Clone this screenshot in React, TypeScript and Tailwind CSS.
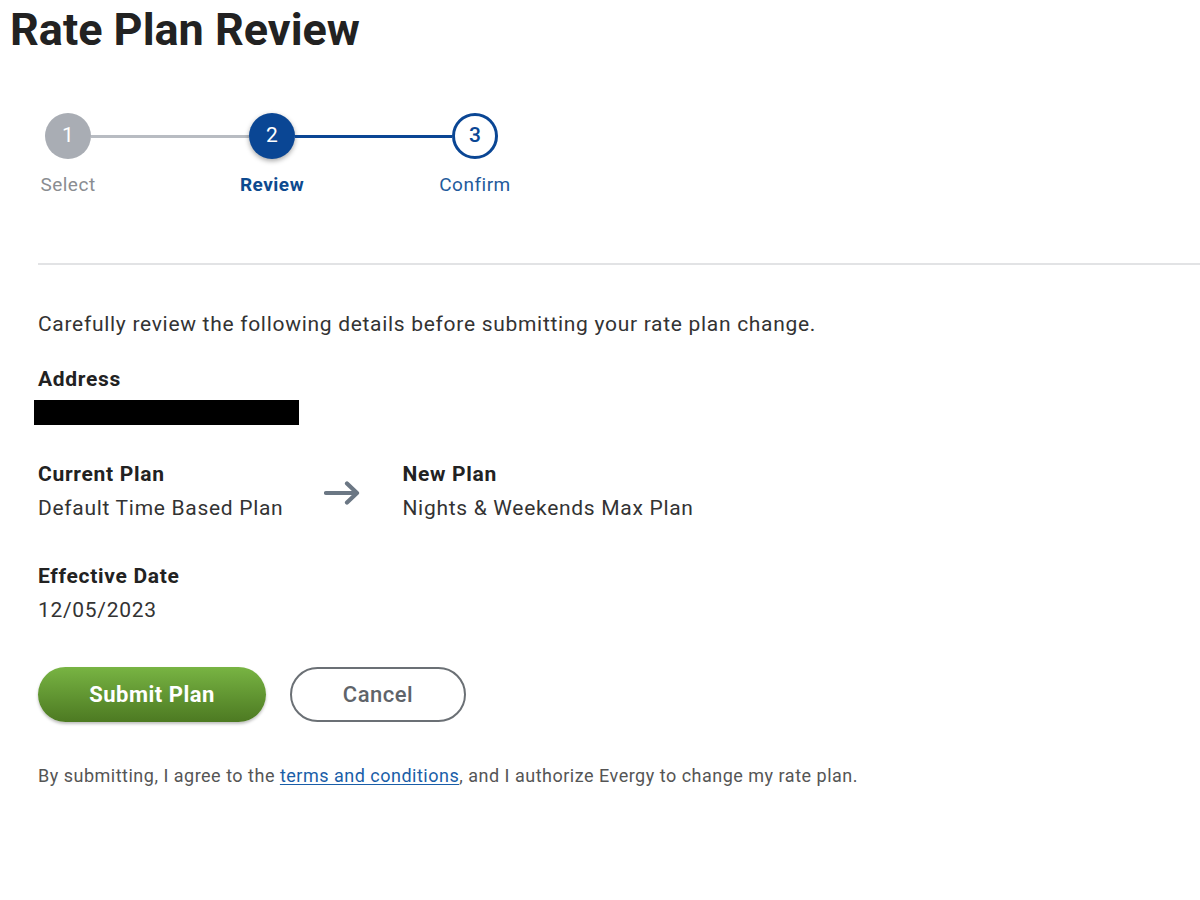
import React from "react";

const steps = [
	{ n: 1, label: "Select", state: "done" },
	{ n: 2, label: "Review", state: "active" },
	{ n: 3, label: "Confirm", state: "todo" },
];

const Stepper: React.FC = () => (
	<div className="flex items-start ml-[22px] mt-[55px]">
		{steps.map((s, i) => (
			<React.Fragment key={s.n}>
				<div className="flex flex-col items-center w-[92px]">
					<div
						className={
							s.state === "done"
								? "w-[46px] h-[46px] rounded-full bg-[#a9adb4] text-white flex items-center justify-center text-[21px]"
								: s.state === "active"
									? "w-[46px] h-[46px] rounded-full bg-[#0a4694] text-white flex items-center justify-center text-[21px] shadow-[0_2px_5px_rgba(0,0,0,0.35)]"
									: "w-[46px] h-[46px] rounded-full bg-white border-[3px] border-[#0a4694] text-[#0a4694] flex items-center justify-center text-[21px] font-medium"
						}
					>
						{s.n}
					</div>
					<span
						className={
							s.state === "done"
								? "mt-[13px] text-[19px] leading-[26px] tracking-[0.5px] text-[#8a8d91]"
								: s.state === "active"
									? "mt-[13px] text-[19px] leading-[26px] tracking-[0.5px] font-bold text-[#0d4a8f]"
									: "mt-[13px] text-[19px] leading-[26px] tracking-[0.5px] text-[#1f5b9c]"
						}
					>
						{s.label}
					</span>
				</div>
				{i < steps.length - 1 && (
					<div
						className={
							i === 0
								? "h-[3px] w-[158px] -mx-[23px] mt-[22px] bg-[#b8bcc2]"
								: "h-[3px] w-[157px] -mx-[23px] mt-[22px] bg-[#0a4694]"
						}
					/>
				)}
			</React.Fragment>
		))}
	</div>
);

export default function App() {
	return (
		<div className="min-h-[900px] bg-white font-['Roboto',sans-serif] text-[#2a2a2a]">
			<h1 className="pl-[10px] pt-[2px] text-[45px] leading-[56px] font-bold text-[#222]">Rate Plan Review</h1>
			<Stepper />
			<div className="ml-[38px] mt-[65px] h-[2px] bg-[#e2e3e5]" />
			<div className="pl-[38px] text-[21px] tracking-[0.7px]">
				<p className="mt-[45px] leading-[28px] text-[#333]">
					Carefully review the following details before submitting your rate plan change.
				</p>
				<div className="mt-[27px]">
					<div className="leading-[28px] font-bold text-[#222]">Address</div>
					<div className="-ml-[4px] mt-[7px] w-[265px] h-[25px] bg-black" />
				</div>
				<div className="mt-[34px] flex items-start">
					<div>
						<div className="leading-[30px] font-bold text-[#222]">Current Plan</div>
						<div className="mt-[4px] leading-[30px] text-[#333]">Default Time Based Plan</div>
					</div>
					<svg className="ml-[41px] mr-[42px] mt-[22px]" width="36" height="24" viewBox="0 0 36 24" fill="none">
						<path d="M2 12H32M23 2.5L33 12L23 21.5" stroke="#6b7784" strokeWidth="4.2" strokeLinecap="round" strokeLinejoin="round" />
					</svg>
					<div>
						<div className="leading-[30px] font-bold text-[#222]">New Plan</div>
						<div className="mt-[4px] leading-[30px] text-[#333]">Nights &amp; Weekends Max Plan</div>
					</div>
				</div>
				<div className="mt-[38px]">
					<div className="leading-[30px] font-bold text-[#222]">Effective Date</div>
					<div className="mt-[4px] leading-[30px] text-[#333]">12/05/2023</div>
				</div>
				<div className="mt-[42px] flex gap-[24px]">
					<button className="w-[228px] h-[55px] rounded-full bg-gradient-to-b from-[#78b443] to-[#4d7a22] text-white text-[22px] tracking-[0.5px] font-bold shadow-[0_2px_3px_rgba(0,0,0,0.25)]">
						Submit Plan
					</button>
					<button className="w-[176px] h-[55px] rounded-full border-2 border-[#6b7075] bg-white text-[#5f646a] text-[22px] tracking-[0.5px] font-medium">
						Cancel
					</button>
				</div>
				<p className="mt-[41px] text-[18px] leading-[26px] tracking-[0.5px] text-[#555]">
					By submitting, I agree to the{" "}
					<a href="#" className="text-[#1a5ea8] underline underline-offset-2">
						terms and conditions
					</a>
					, and I authorize Evergy to change my rate plan.
				</p>
			</div>
		</div>
	);
}
